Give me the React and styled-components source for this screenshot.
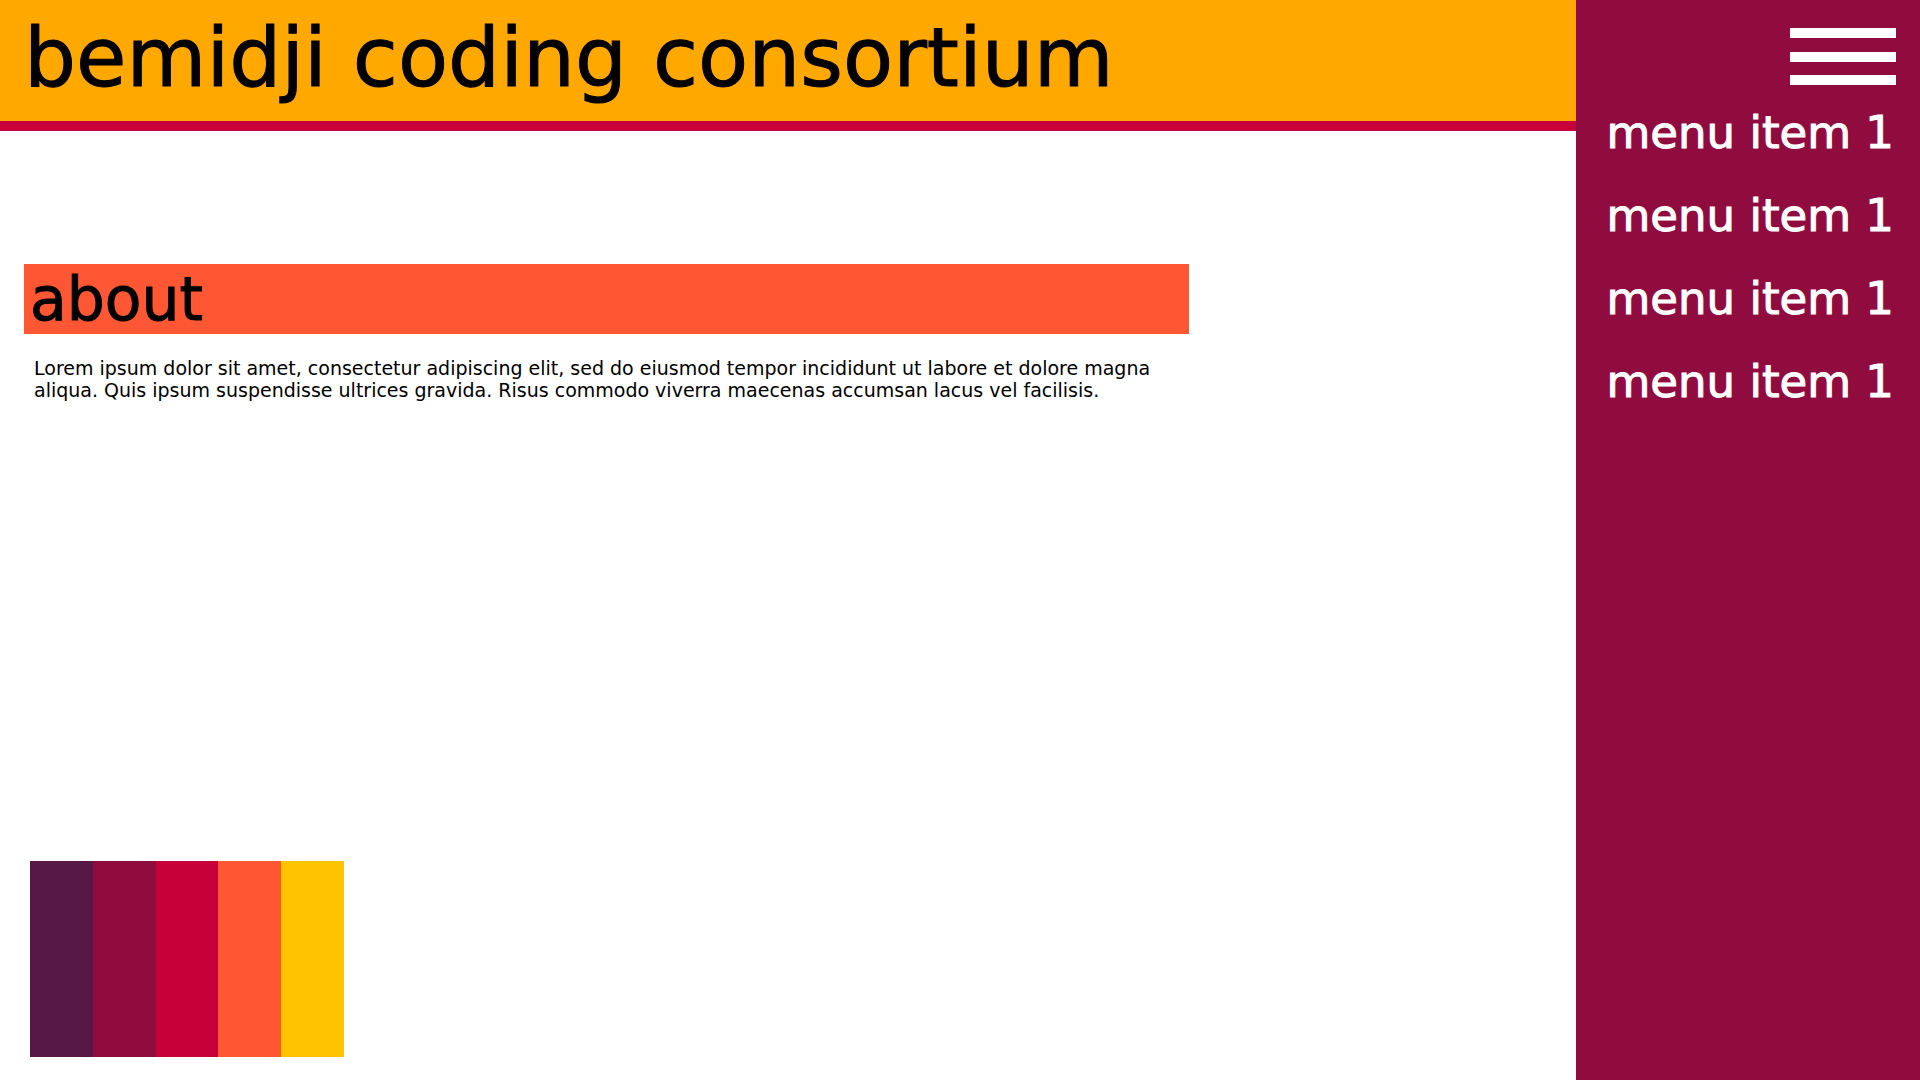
import React from 'react';
import styled, { createGlobalStyle } from 'styled-components';

const GlobalStyle = createGlobalStyle`
  *, *::before, *::after { box-sizing: border-box; }
  body {
    margin: 0;
    background: #fff;
    color: #000;
    font-family: "DejaVu Sans", sans-serif;
  }
  h1, h2, p, ul { margin: 0; padding: 0; font-weight: 400; }
`;

const Page = styled.div`
  display: grid;
  grid-template-columns: minmax(0, 1fr) 344px;
  min-height: 100vh;
`;

const Content = styled.div`
  display: flex;
  flex-direction: column;
`;

const Header = styled.header`
  padding: 14px 24px 19px;
  background: #ffa800;
  border-bottom: 10px solid #c70039;
`;

const Title = styled.h1`
  font-size: 82px;
  line-height: 88px;
  -webkit-text-stroke: 1px currentColor;
`;

const Main = styled.main`
  display: flex;
  flex: 1;
  flex-direction: column;
  justify-content: space-between;
  gap: 48px;
  padding: 133px 24px 23px;
`;

const Section = styled.section`
  max-width: 1165px;
`;

const SectionTitle = styled.h2`
  padding: 0 6px;
  background: #ff5733;
  font-size: 60px;
  line-height: 70px;
  -webkit-text-stroke: 1px currentColor;
`;

const Text = styled.p`
  padding: 23px 10px;
  font-size: 19px;
  line-height: 22px;
`;

const Palette = styled.div`
  display: flex;
  width: 314px;
  height: 196px;
  margin-left: 6px;
`;

const Swatch = styled.div`
  flex: 1;
  background: ${(props) => props.$color};
`;

const Sidebar = styled.nav`
  display: flex;
  flex-direction: column;
  align-items: flex-end;
  padding: 28px 24px;
  background: #900c3f;
  color: #fff;
`;

const MenuButton = styled.button`
  display: flex;
  flex-direction: column;
  justify-content: space-between;
  width: 106px;
  height: 57px;
  padding: 0;
  border: 0;
  background: none;
  cursor: pointer;
`;

const Bar = styled.span`
  width: 100%;
  height: 10px;
  background: #fff;
`;

const MenuList = styled.ul`
  padding: 6px 2px 0 0;
  list-style: none;
`;

const MenuLink = styled.a`
  display: block;
  color: inherit;
  font-size: 45px;
  line-height: 83px;
  text-decoration: none;
  white-space: nowrap;
  -webkit-text-stroke: 1px currentColor;
`;

const swatches = ['#571845', '#900c3e', '#c70039', '#ff5733', '#ffc300'];
const menuItems = ['menu item 1', 'menu item 1', 'menu item 1', 'menu item 1'];

export default function App() {
  return (
    <>
      <GlobalStyle />
      <Page>
        <Content>
          <Header>
            <Title>bemidji coding consortium</Title>
          </Header>
          <Main>
            <Section>
              <SectionTitle>about</SectionTitle>
              <Text>
                Lorem ipsum dolor sit amet, consectetur adipiscing elit, sed do
                eiusmod tempor incididunt ut labore et dolore magna aliqua. Quis
                ipsum suspendisse ultrices gravida. Risus commodo viverra
                maecenas accumsan lacus vel facilisis.
              </Text>
            </Section>
            <Palette>
              {swatches.map((color) => (
                <Swatch key={color} $color={color} />
              ))}
            </Palette>
          </Main>
        </Content>
        <Sidebar>
          <MenuButton type="button" aria-label="Menu">
            <Bar />
            <Bar />
            <Bar />
          </MenuButton>
          <MenuList>
            {menuItems.map((label, index) => (
              <li key={index}>
                <MenuLink href="#">{label}</MenuLink>
              </li>
            ))}
          </MenuList>
        </Sidebar>
      </Page>
    </>
  );
}
